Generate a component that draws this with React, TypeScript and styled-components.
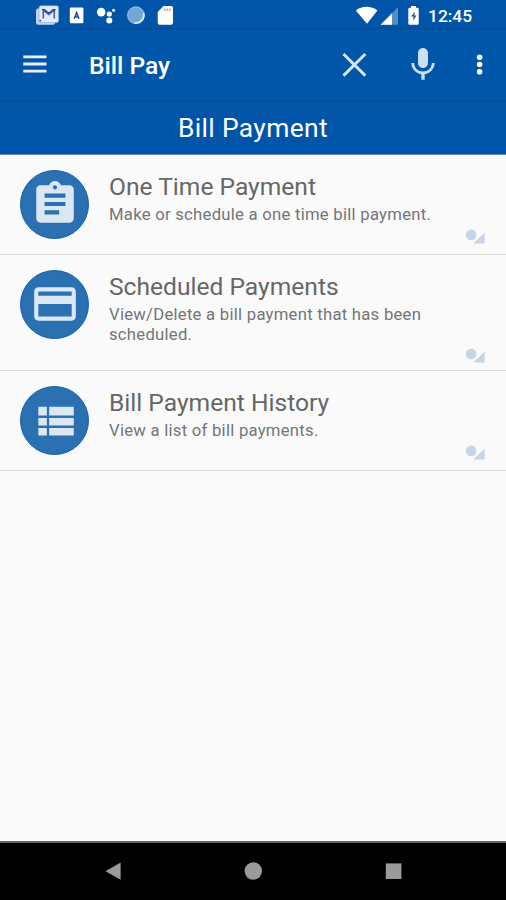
import React from "react";
import styled, { createGlobalStyle } from "styled-components";

const GlobalStyle = createGlobalStyle`
  * { box-sizing: border-box; }
  body { margin: 0; background: #fafafa; font-family: Roboto, "Liberation Sans", sans-serif; }
  svg { display: block; flex: none; }
`;

const Screen = styled.div`
  display: flex;
  flex-direction: column;
  width: 506px;
  height: 900px;
  overflow: hidden;
  background: #fafafa;
`;

const StatusBar = styled.div`
  display: flex;
  justify-content: space-between;
  height: 30px;
  padding: 0 33px 0 35px;
  background: linear-gradient(#0055a8 27px, #00509a 28px, #004f97 29px, #0055a6 30px);
`;

const StatusGroup = styled.div`
  display: flex;
  align-items: flex-start;
`;

const Clock = styled.span`
  width: 45px;
  margin-left: 9px;
  color: #fff;
  font-size: 17.4px;
  font-weight: 500;
  line-height: 32px;
  white-space: nowrap;
`;

const AppBar = styled.header`
  display: flex;
  align-items: center;
  height: 69px;
  padding: 0 21px 1px 23px;
  background: #0056a9;
`;

const AppTitle = styled.h1`
  flex: 1;
  margin: 4px 0 0 42px;
  color: #fff;
  font-size: 24.6px;
  font-weight: 500;
  line-height: 30px;
`;

const Actions = styled.div`
  display: flex;
  align-items: center;
`;

const PageTitle = styled.h2`
  height: 56px;
  margin: 0;
  padding-top: 1px;
  border-bottom: 1px solid #5c87b8;
  background: linear-gradient(#004f95 0, #004f93 2px, #0055a8 4px);
  color: #fff;
  font-size: 26.4px;
  font-weight: 400;
  line-height: 56px;
  letter-spacing: 0.35px;
  text-align: center;
`;

const List = styled.main`
  flex: 1;
`;

const Row = styled.article<{ $height: number }>`
  display: flex;
  height: ${(p) => p.$height}px;
  padding: 14.5px 21px 0 20px;
  border-bottom: 1.5px solid #dcdcdc;
`;

const Disc = styled.div`
  display: flex;
  align-items: center;
  justify-content: center;
  width: 69px;
  height: 69px;
  padding: 0.8px 0 0 0.8px;
  border: 1.5px solid #1261ad;
  border-radius: 50%;
  background: #2b70b1;
  color: #dbe8f3;
`;

const RowText = styled.div`
  width: 340px;
  margin-left: 20px;
`;

const RowTitle = styled.h3`
  margin: 2.5px 0 0;
  color: #666;
  font-size: 24.6px;
  font-weight: 400;
  line-height: 29px;
  white-space: nowrap;
`;

const RowNote = styled.p`
  margin: 3.5px 0 0;
  color: #757575;
  font-size: 16.7px;
  line-height: 20px;
  letter-spacing: 0.25px;
`;

const RowMark = styled.div<{ $lift: number }>`
  align-self: flex-end;
  margin: 0 0 ${(p) => p.$lift}px auto;
`;

const NavBar = styled.nav`
  display: flex;
  align-items: center;
  justify-content: space-between;
  height: 59px;
  padding: 0 104px 2px;
  border-top: 2px solid #666;
  background: #000;
`;

const Notifications = () => (
  <StatusGroup>
    <svg width="26" height="30" viewBox="35 0 26 30">
      <rect x="36" y="8.5" width="19" height="16.3" rx="2" fill="#c3d3f0" />
      <rect x="39" y="5.8" width="19.6" height="16.8" rx="2" fill="#e4ebfa" stroke="#8aa4dc" strokeWidth=".6" />
      <path d="M43.3 18.5V10.2l5.5 4.4 5.5-4.4v8.3" fill="none" stroke="#4a5fb0" strokeWidth="1.6" />
      <path d="M42 9.6h2.6l4.2 3.6 4.2-3.6h2.6" fill="none" stroke="#2a3c92" strokeWidth="1.2" />
      <circle cx="40.3" cy="20.6" r=".9" fill="#2b3f97" />
    </svg>
    <svg width="32" height="30" viewBox="61 0 32 30">
      <rect x="69.8" y="7.5" width="13.6" height="15.8" rx="1" fill="#fff" />
      <path d="M74.2 18.7l2.4-6 2.4 6M75 17h3.2" fill="none" stroke="#28538f" strokeWidth="1.6" />
    </svg>
    <svg width="30" height="30" viewBox="93 0 30 30" fill="#fff">
      <circle cx="101.2" cy="12.1" r="4.3" />
      <circle cx="109.3" cy="14" r="2.6" />
      <circle cx="109.3" cy="20.5" r="3" />
      <circle cx="113.6" cy="10.2" r="1.5" />
    </svg>
    <svg width="30" height="30" viewBox="123 0 30 30">
      <circle cx="135.9" cy="15.2" r="8.2" fill="#70a7d7" stroke="#92b8df" strokeWidth="1.3" />
      <path d="M143.5 13a8 8 0 0 1-9 10" fill="none" stroke="#dceefb" strokeWidth="1.8" />
    </svg>
    <svg width="24" height="30" viewBox="153 0 24 30">
      <path d="M163.5 6h7.5a2 2 0 0 1 2 2v14.8a2 2 0 0 1-2 2h-11.3a2 2 0 0 1-2-2V12z" fill="#fff" />
      <path d="M164.8 8.4v2.6M167.4 8.4v2.6M170 8.4v2.6" stroke="#a2abbd" strokeWidth="1.5" />
    </svg>
  </StatusGroup>
);

const SystemStatus = () => (
  <StatusGroup>
    <svg width="23" height="30" viewBox="355 0 23 30">
      <path d="M355.8 10.4c6-5 15.6-5 21.6 0L367 23.8z" fill="#fff" />
    </svg>
    <svg width="24" height="30" viewBox="378 0 24 30">
      <path d="M398 7v17.8h-17z" fill="#568ec4" />
      <path d="M392 13.3v11.5h-11.5z" fill="#fff" />
    </svg>
    <svg width="17" height="30" viewBox="402 0 17 30">
      <path d="M411 6h5v1.7h1.4a1.3 1.3 0 0 1 1.3 1.3v14.5a1.3 1.3 0 0 1-1.3 1.3h-7.8a1.3 1.3 0 0 1-1.3-1.3V9a1.3 1.3 0 0 1 1.3-1.3h1.4z" fill="#fff" />
      <path d="M414.6 11.5l-3.3 5h2.1v4.3l3-5.3h-2z" fill="#30547d" />
    </svg>
    <Clock>12:45</Clock>
  </StatusGroup>
);

const MenuIcon = () => (
  <svg width="24" height="18" viewBox="0 0 24 18">
    <path d="M.3 1.8h23.2M.3 9h23.2M.3 16.2h23.2" stroke="#e9f0fc" strokeWidth="2.8" />
  </svg>
);

const ToolbarActions = () => (
  <Actions>
    <svg width="64" height="40" viewBox="0 0 64 40">
      <path d="M2.5 10l21.8 21.6M24.3 10L2.5 31.6" fill="none" stroke="#d5e5f7" strokeWidth="2.9" />
    </svg>
    <svg width="40" height="40" viewBox="1.2 -.45 24 24" fill="#ccdff3">
      <path d="M12 14c1.66 0 2.99-1.34 2.99-3L15 5c0-1.66-1.34-3-3-3S9 3.34 9 5v6c0 1.66 1.34 3 3 3zm5.3-3c0 3-2.54 5.1-5.3 5.1S6.7 14 6.7 11H5c0 3.41 2.72 6.23 6 6.72V21h2v-3.28c3.28-.48 6-3.3 6-6.72h-1.7z" />
    </svg>
    <svg width="40" height="40" viewBox="0 0 40 40" fill="#fff">
      <circle cx="34.6" cy="13.2" r="2.8" />
      <circle cx="34.6" cy="20.5" r="2.8" />
      <circle cx="34.6" cy="27.8" r="2.8" />
    </svg>
  </Actions>
);

const glyphs = {
  assignment:
    "M19 3h-4.18C14.4 1.84 13.3 1 12 1c-1.3 0-2.4.84-2.82 2H5c-1.1 0-2 .9-2 2v14c0 1.1.9 2 2 2h14c1.1 0 2-.9 2-2V5c0-1.1-.9-2-2-2zm-7 0c.55 0 1 .45 1 1s-.45 1-1 1-1-.45-1-1 .45-1 1-1zm2 14H7v-2h7v2zm3-4H7v-2h10v2zm0-4H7V7h10v2z",
  card: "M20 4H4c-1.11 0-1.99.89-1.99 2L2 18c0 1.11.89 2 2 2h16c1.11 0 2-.89 2-2V6c0-1.11-.89-2-2-2zm0 14H4v-6h16v6zm0-10H4V6h16v2z",
  list: "M4 14.2h4.1v-3.7H4v3.7zM4 19h4.1v-3.7H4V19zM4 9.3h4.1V5.2H4v4.1zM9.2 14.2H21v-3.7H9.2v3.7zM9.2 19H21v-3.7H9.2V19zM9.2 5.2v4.1H21V5.2H9.2z",
};

const items: { glyph: keyof typeof glyphs; title: string; note: string; height: number; lift: number }[] = [
  { glyph: "assignment", title: "One Time Payment", note: "Make or schedule a one time bill payment.", height: 100, lift: 10 },
  { glyph: "card", title: "Scheduled Payments", note: "View/Delete a bill payment that has been scheduled.", height: 116.4, lift: 7 },
  { glyph: "list", title: "Bill Payment History", note: "View a list of bill payments.", height: 99.6, lift: 10 },
];

export default function App() {
  return (
    <>
      <GlobalStyle />
      <Screen>
        <StatusBar>
          <Notifications />
          <SystemStatus />
        </StatusBar>
        <AppBar>
          <MenuIcon />
          <AppTitle>Bill Pay</AppTitle>
          <ToolbarActions />
        </AppBar>
        <PageTitle>Bill Payment</PageTitle>
        <List>
          {items.map((item) => (
            <Row key={item.title} $height={item.height}>
              <Disc>
                <svg width="50" height="50" viewBox="0 0 24 24" fill="currentColor">
                  <path d={glyphs[item.glyph]} />
                </svg>
              </Disc>
              <RowText>
                <RowTitle>{item.title}</RowTitle>
                <RowNote>{item.note}</RowNote>
              </RowText>
              <RowMark $lift={item.lift}>
                <svg width="20" height="15" viewBox="0 0 20 15" fill="#c6d5e4">
                  <circle cx="6.2" cy="5.9" r="5.3" />
                  <path d="M19.6 3.5v11H8.3z" />
                </svg>
              </RowMark>
            </Row>
          ))}
        </List>
        <NavBar>
          <svg width="18" height="20" viewBox="0 0 18 20">
            <path d="M1.5 10.2L16.6 1.6v17.2z" fill="#9b9b9b" />
          </svg>
          <svg width="20" height="20" viewBox="0 0 20 20">
            <circle cx="10.3" cy="10" r="8.7" fill="#9b9b9b" />
          </svg>
          <svg width="18" height="20" viewBox="0 0 18 20">
            <rect x="1.8" y="2.4" width="15.6" height="15.6" fill="#9b9b9b" />
          </svg>
        </NavBar>
      </Screen>
    </>
  );
}
